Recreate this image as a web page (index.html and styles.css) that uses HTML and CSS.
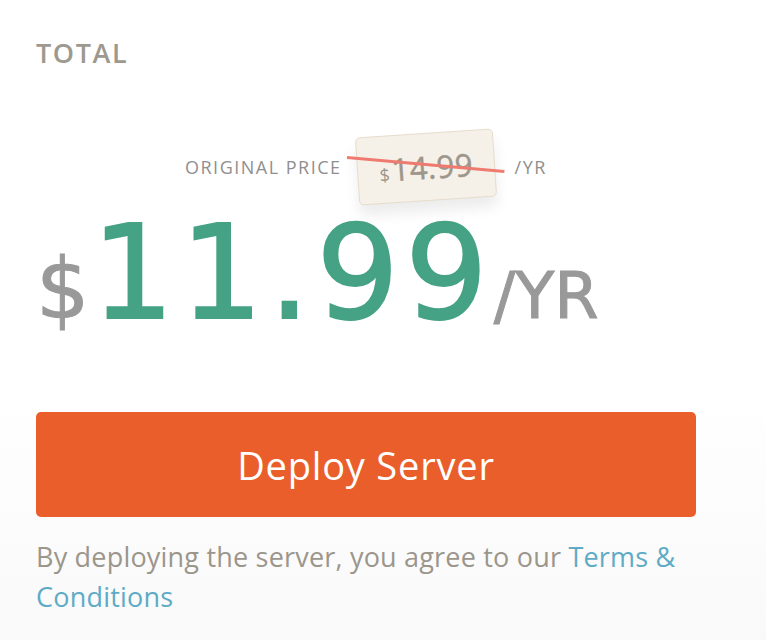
FILE: index.html
```html
<!DOCTYPE html>
<html lang="en">
<head>
    <meta charset="UTF-8">
    <meta name="viewport" content="width=device-width, initial-scale=1.0">
    <title>Checkout Total</title>
    <link rel="stylesheet" href="styles.css">
</head>
<body>
    <div class="summary">
        <h2 class="label">TOTAL</h2>

        <div class="original">
            <span class="original-label">ORIGINAL PRICE</span>
            <span class="tag">
                <span class="tag-currency">$</span><span class="tag-amount">14.99</span>
            </span>
            <span class="strike"></span>
            <span class="original-period">/YR</span>
        </div>

        <div class="price">
            <span class="price-currency">$</span>
            <span class="price-amount">11.99</span>
            <span class="price-period">/YR</span>
        </div>

        <button class="deploy">Deploy Server</button>

        <p class="terms">By deploying the server, you agree to our <a href="#">Terms &amp; Conditions</a></p>
    </div>
</body>
</html>
```

FILE: styles.css
```css
html {
    height: 100%;
}

body {
    margin: 0;
    min-height: 100%;
    font-family: "Open Sans", "Noto Sans", sans-serif;
    background: linear-gradient(to bottom, #ffffff 0%, #ffffff 60%, #f9f9f9 100%);
}

.summary {
    width: 660px;
    padding: 34px 0 0 36px;
}

.label {
    margin: 0;
    font-size: 27px;
    font-weight: 600;
    letter-spacing: 1.6px;
    color: #9e998f;
}

.original {
    position: relative;
    display: flex;
    align-items: center;
    margin: 66px 0 0 149px;
    height: 60px;
}

.original-label,
.original-period {
    font-size: 18px;
    color: #8f8f8f;
    letter-spacing: 1.5px;
}

.tag {
    display: inline-flex;
    align-items: baseline;
    justify-content: center;
    width: 136px;
    height: 66px;
    margin: 0 20px 0 15px;
    line-height: 66px;
    background-color: #f6f1e8;
    border: 1px solid #e6dccb;
    border-radius: 5px;
    box-shadow: 0 10px 14px rgba(0, 0, 0, 0.08);
    transform: rotate(-3.8deg);
    color: #9d968b;
}

.tag-currency {
    font-size: 18px;
    margin-right: 2px;
}

.tag-amount {
    font-size: 31px;
    letter-spacing: 0.5px;
    -webkit-text-stroke: 0.5px #9d968b;
}

/* red line across the old price */
.strike {
    position: absolute;
    left: 162px;
    top: 19px;
    width: 158px;
    height: 3px;
    background-color: #ef7a70;
    transform: rotate(5.1deg);
    transform-origin: left center;
}

.price {
    display: flex;
    align-items: baseline;
    margin-top: 11px;
    line-height: 1;
}

.price-currency {
    font-family: "DejaVu Sans", sans-serif;
    font-size: 84px;
    color: #999999;
    margin-right: 2px;
    -webkit-text-stroke: 1px #999999;
}

.price-amount {
    font-family: "DejaVu Sans", sans-serif;
    font-size: 130px;
    color: #45a284;
    letter-spacing: 6px;
    -webkit-text-stroke: 2px #45a284;
}

.price-period {
    font-family: "DejaVu Sans", sans-serif;
    font-size: 64px;
    color: #999999;
    -webkit-text-stroke: 1px #999999;
}

.deploy {
    display: block;
    width: 660px;
    height: 105px;
    margin-top: 74px;
    font-family: "Open Sans", sans-serif;
    font-size: 38px;
    letter-spacing: 0.8px;
    color: #ffffff;
    background-color: #e95e2b;
    border: none;
    border-radius: 5px;
    cursor: pointer;
}

.terms {
    margin: 20px 0 0;
    font-size: 27px;
    line-height: 40px;
    letter-spacing: 0.2px;
    color: #9b968c;
}

.terms a {
    color: #5eabc6;
    text-decoration: none;
}
```
